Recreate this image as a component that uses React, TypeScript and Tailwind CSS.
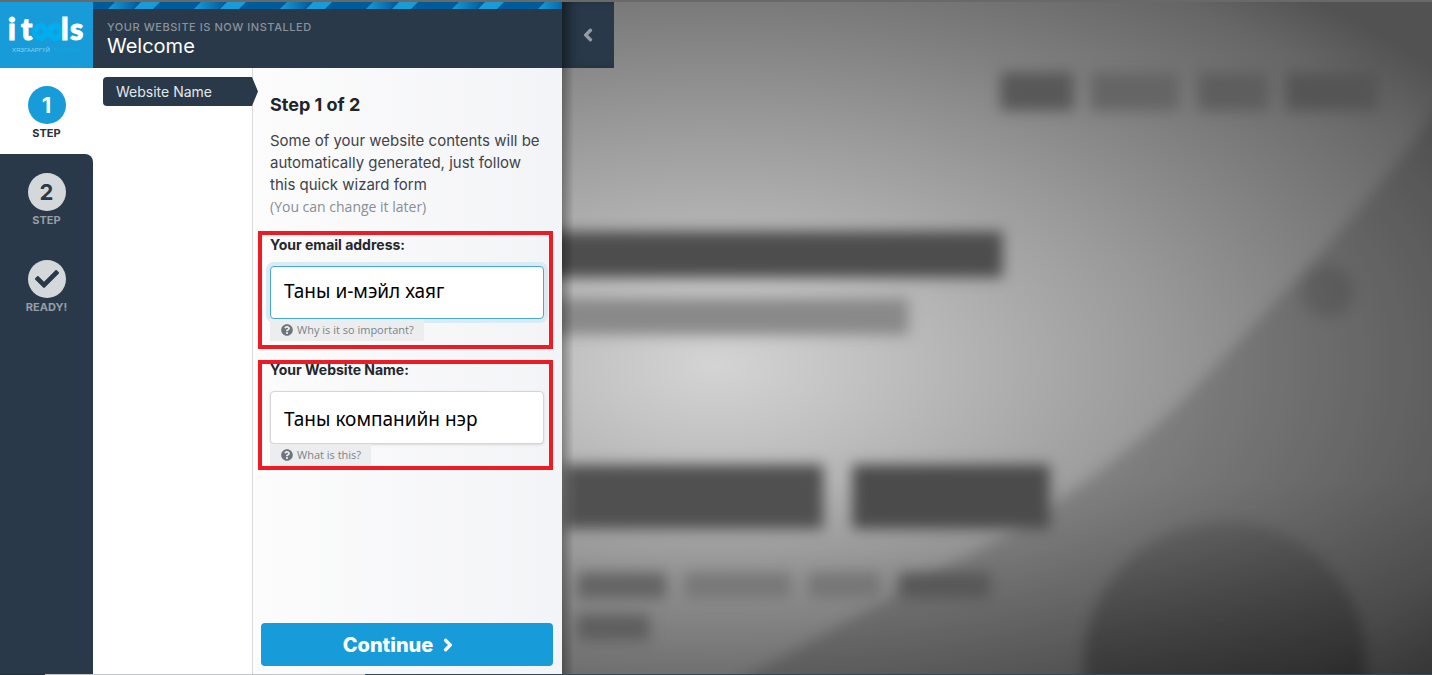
import type { ReactNode } from "react";
import {
  FaCheck,
  FaChevronLeft,
  FaChevronRight,
  FaQuestionCircle,
} from "react-icons/fa";

function Logo() {
  return (
    <a
      href="#"
      aria-label="itools"
      className="flex h-[66px] items-center justify-center bg-[#189cd9]"
    >
      <svg viewBox="0 0 93 66" className="h-full w-full">
        <path
          d="M48 30 C45 26 43 24 41 24 a6 6 0 0 0 0 12 C43 36 45 34 48 30 C51 26 53 24 55 24 a6 6 0 0 1 0 12 C53 36 51 34 48 30 Z"
          fill="none"
          stroke="#00aeef"
          strokeWidth="6"
        />
        <g
          fill="#fff"
          stroke="#fff"
          fontFamily="Lato, sans-serif"
          fontSize="30"
          fontWeight="900"
        >
          <text x="8" y="38">i</text>
          <text x="21" y="38">t</text>
          <text x="61" y="38">l</text>
          <text x="70" y="38">s</text>
        </g>
        <g fontFamily="'Liberation Sans', sans-serif" fontSize="6">
          <text x="12" y="50" fill="#8fd0ee">ХЯЗГААРГҮЙ</text>
          <text x="54" y="50" fill="#10a6e2">БОЛОМЖ</text>
        </g>
      </svg>
    </a>
  );
}

function Step({
  label,
  active,
  children,
}: {
  label: string;
  active?: boolean;
  children: ReactNode;
}) {
  return (
    <button
      type="button"
      className={
        active
          ? "flex h-[86px] w-full flex-col items-center bg-white pt-[18px] text-[#2b2f36]"
          : "flex h-[87px] w-full flex-col items-center pt-[19px] text-[#969ea6]"
      }
    >
      <span
        className={
          active
            ? "flex size-[38px] items-center justify-center rounded-full bg-[#189cd9] text-[22px] font-bold text-white"
            : "flex size-[38px] items-center justify-center rounded-full bg-[#d4d8db] text-[22px] font-bold text-[#293949]"
        }
      >
        {children}
      </span>
      <span className="mt-px text-[11px] leading-4 font-bold">{label}</span>
    </button>
  );
}

function Stripes() {
  return (
    <svg className="h-[7px] w-full" aria-hidden="true">
      <defs>
        <linearGradient id="fade">
          <stop offset="0" stopColor="#189cd9" />
          <stop offset="1" stopColor="#005b9a" />
        </linearGradient>
        <pattern id="stripes" width="86" height="7" patternUnits="userSpaceOnUse">
          <rect width="86" height="7" fill="#005b9a" />
          <path d="M15 7 L22 0 H46 L39 7 Z" fill="url(#fade)" />
          <path d="M41 7 L48 0 H67 L60 7 Z" fill="#189cd9" />
        </pattern>
      </defs>
      <rect width="100%" height="7" fill="url(#stripes)" />
    </svg>
  );
}

function Field({
  id,
  label,
  value,
  hint,
  focused,
}: {
  id: string;
  label: string;
  value: string;
  hint: string;
  focused?: boolean;
}) {
  return (
    <div
      className={
        focused
          ? "border-4 border-[#ed1c24] pt-1 pr-[5px] pb-1 pl-2"
          : "border-4 border-[#ed1c24] pr-[5px] pl-2"
      }
    >
      <label
        htmlFor={id}
        className="block text-sm leading-3 font-bold text-[#24272d]"
      >
        {label}
      </label>
      <input
        id={id}
        type="text"
        defaultValue={value}
        className={
          focused
            ? "mt-[15px] block h-[53px] w-full rounded border border-[#45a9d6] bg-white px-[13px] pb-1 font-['Noto_Sans',sans-serif] text-[19px] text-black shadow-[0_0_0_4px_#dcebf3] outline-none"
            : "mt-[15px] block h-[53px] w-full rounded border border-[#d3d5d8] bg-white px-[13px] pt-0.5 font-['Noto_Sans',sans-serif] text-[19px] text-black shadow-sm outline-none"
        }
      />
      <button
        type="button"
        className="flex h-[22px] items-center gap-1 bg-[#ecedee] pr-2.5 pl-[11px] font-['Open_Sans',sans-serif] text-[11px] text-[#7b838b]"
      >
        <FaQuestionCircle className="size-3 text-[#6c757d]" />
        {hint}
      </button>
    </div>
  );
}

function Preview() {
  return (
    <svg
      viewBox="562 2 870 671"
      preserveAspectRatio="xMinYMin slice"
      className="absolute inset-0 h-full w-full"
      aria-hidden="true"
    >
      <defs>
        <radialGradient
          id="glow"
          gradientUnits="userSpaceOnUse"
          cx="0"
          cy="0"
          r="1"
          gradientTransform="translate(715 365) scale(900 490)"
        >
          <stop offset="0" stopColor="#d4d4d4" />
          <stop offset="0.15" stopColor="#c3c3c3" />
          <stop offset="0.3" stopColor="#b1b1b1" />
          <stop offset="0.5" stopColor="#999999" />
          <stop offset="0.7" stopColor="#7f7f7f" />
          <stop offset="0.9" stopColor="#666666" />
          <stop offset="1" stopColor="#525252" />
        </radialGradient>
        <linearGradient id="disc" x2="0" y2="1">
          <stop offset="0" stopOpacity="0.12" />
          <stop offset="0.55" stopOpacity="0.3" />
        </linearGradient>
        <linearGradient id="edge">
          <stop offset="0" stopOpacity="0.3" />
          <stop offset="1" stopOpacity="0" />
        </linearGradient>
        <linearGradient id="floor" x2="0" y2="1">
          <stop offset="0" stopOpacity="0" />
          <stop offset="1" stopOpacity="0.18" />
        </linearGradient>
        <filter
          id="soft"
          x="-20%"
          y="-20%"
          width="140%"
          height="140%"
          colorInterpolationFilters="sRGB"
        >
          <feGaussianBlur stdDeviation="7" />
        </filter>
      </defs>
      <rect x="562" y="2" width="870" height="671" fill="url(#glow)" />
      <rect x="562" y="480" width="870" height="193" fill="url(#floor)" />
      <g filter="url(#soft)">
        <path
          d="M1470 60 C1432 120 1365 205 1299 275 S1190 396 1143 435 S1020 530 949 564 L738 680 V720 H1470 Z"
          fillOpacity="0.17"
        />
      </g>
      <g filter="url(#soft)">
        <circle cx="1327" cy="291" r="26" fillOpacity="0.12" />
        <circle cx="1224" cy="662" r="141" fill="url(#disc)" />
        <rect x="1000" y="72" width="73" height="38" fill="#585858" />
        <rect x="1090" y="72" width="88" height="38" fill="#656565" />
        <rect x="1197" y="72" width="71" height="38" fill="#5e5e5e" />
        <rect x="1285" y="72" width="92" height="38" fill="#555555" />
        <rect x="520" y="231" width="482" height="46" fill="#4d4d4d" />
        <rect x="520" y="298" width="388" height="36" fill="#898989" />
        <rect x="564" y="464" width="259" height="64" fill="#505050" />
        <rect x="852" y="464" width="197" height="64" fill="#4b4b4b" />
        <rect x="577" y="572" width="89" height="26" fill="#646464" />
        <rect x="684" y="572" width="107" height="26" fill="#787878" />
        <rect x="808" y="572" width="72" height="26" fill="#767676" />
        <rect x="898" y="572" width="92" height="26" fill="#585858" />
        <rect x="577" y="614" width="72" height="26" fill="#5e5e5e" />
      </g>
      <rect x="562" y="2" width="12" height="671" fill="url(#edge)" />
    </svg>
  );
}

export default function App() {
  return (
    <div className="flex min-h-screen flex-col bg-[#293949] font-[Inter,sans-serif]">
      <div className="h-0.5 bg-[#696969]" />

      <div className="flex grow">
        <nav className="flex w-[93px] shrink-0 flex-col">
          <Logo />
          <Step label="STEP" active>
            1
          </Step>
          <div className="flex grow flex-col bg-white">
            <div className="grow rounded-tr-lg bg-[#293949]">
              <Step label="STEP">2</Step>
              <Step label="READY!">
                <FaCheck className="size-6" />
              </Step>
            </div>
          </div>
        </nav>

        <main className="flex w-[469px] shrink-0 flex-col">
          <header className="h-[66px] bg-[#293949]">
            <Stripes />
            <div className="px-3.5 pt-[9px]">
              <p className="text-[11px] leading-[18px] font-medium tracking-wider text-[#8a939b]">
                YOUR WEBSITE IS NOW INSTALLED
              </p>
              <h1 className="text-xl leading-5 text-white">Welcome</h1>
            </div>
          </header>

          <div className="flex grow bg-white">
            <div className="w-[159px] shrink-0 pt-[9px] pl-2.5">
              <a
                href="#"
                className="relative z-10 flex h-[29px] items-center rounded-l bg-[#293949] pl-[13px] text-sm text-[#e4e7ea]"
              >
                Website Name
                <svg
                  viewBox="0 0 6 29"
                  className="absolute top-0 left-full h-full w-1.5"
                  aria-hidden="true"
                >
                  <path d="M0 0 L6 14.5 L0 29 Z" fill="#293949" />
                </svg>
              </a>
            </div>

            <form className="flex grow flex-col border-l border-[#d9dadb] bg-gradient-to-r from-[#fcfcfc] to-[#f3f4f7]">
              <div className="px-[17px] pt-[27px]">
                <h2 className="text-lg leading-5 font-bold text-[#212529]">
                  Step 1 of 2
                </h2>
                <p className="mt-[15px] text-[15px] leading-[22px] text-[#3f4349]">
                  Some of your website contents will be automatically generated,
                  just follow this quick wizard form
                </p>
                <p className="font-['Open_Sans',sans-serif] text-sm leading-[22px] text-[#868e96]">
                  (You can change it later)
                </p>
              </div>

              <div className="mt-[13px] mr-[9px] ml-[5px] flex flex-col gap-[11px]">
                <Field
                  id="email"
                  label="Your email address:"
                  value="Таны и-мэйл хаяг"
                  hint="Why is it so important?"
                  focused
                />
                <Field
                  id="site-name"
                  label="Your Website Name:"
                  value="Таны компанийн нэр"
                  hint="What is this?"
                />
              </div>

              <button
                type="button"
                className="mt-auto mr-[9px] mb-2 ml-2 flex h-[43px] items-center justify-center gap-2 rounded bg-[#189cd9] pr-4 text-xl font-extrabold text-white"
              >
                Continue
                <FaChevronRight
                  className="size-3.5"
                  stroke="currentColor"
                  strokeWidth="40"
                />
              </button>
            </form>
          </div>
        </main>

        <section className="relative grow overflow-hidden bg-[#777]">
          <Preview />
          <button
            type="button"
            aria-label="Collapse panel"
            className="relative flex h-[66px] w-[52px] items-center justify-center bg-[#293949] text-[#959da5] shadow-[inset_12px_0_12px_-6px_#151d26]"
          >
            <FaChevronLeft
              className="size-3.5"
              stroke="currentColor"
              strokeWidth="40"
            />
          </button>
        </section>
      </div>

      <div className="flex h-px">
        <div className="w-[45px] bg-[#20303c]" />
        <div className="w-80 bg-[#c3c4c6]" />
        <div className="grow bg-[#34495a]" />
      </div>
    </div>
  );
}
